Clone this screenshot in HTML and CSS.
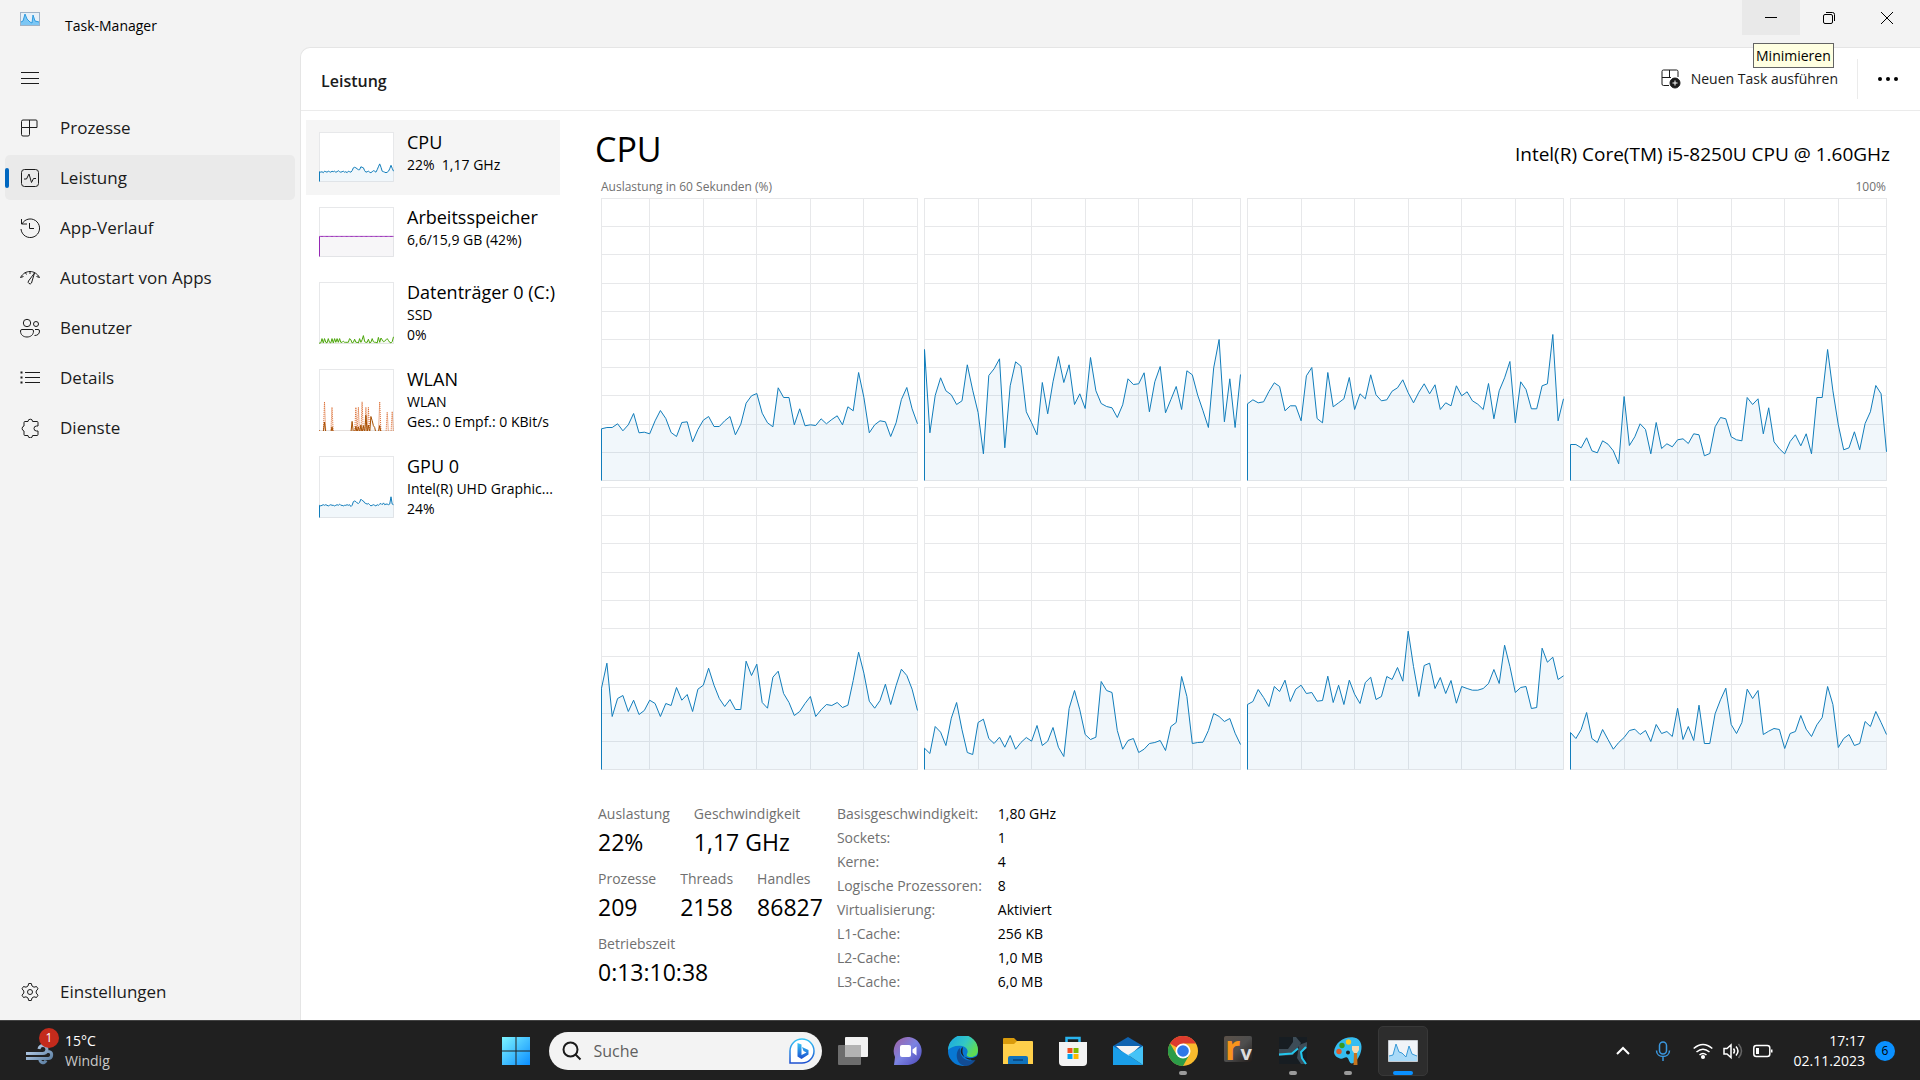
FILE: index.html
```html
<!DOCTYPE html>
<html lang="de">
<head>
  <meta charset="UTF-8">
  <meta name="viewport" content="width=device-width, initial-scale=1.0">
  <title>Task-Manager</title>
  <link rel="stylesheet" href="styles.css">
</head>
<body>

  <header class="titlebar">
    <svg class="app-icon" viewBox="0 0 20 14"><rect x=".5" y=".5" width="19" height="13" fill="#e6f0f8" stroke="#9fb2c6"/><path d="M1 10l2-1 2-7 2 5 3 3 2 1 1-8 2 6 4 1v3H1z" fill="#7cc6f4"/><path d="M1 10l2-1 2-7 2 5 3 3 2 1 1-8 2 6 4 1" fill="none" stroke="#2e9be0"/></svg>
    <span class="app-name">Task-Manager</span>
    <div class="window-buttons">
      <div class="minimize">
        <button class="hover" aria-label="Minimieren"><svg viewBox="0 0 12 12"><path d="M0 5.5h12"/></svg></button>
        <span class="tooltip">Minimieren</span>
      </div>
      <button aria-label="Verkleinern"><svg viewBox="0 0 12 12"><rect x=".5" y="2.500" width="9" height="9" rx="1.500"/><path d="M3 .5h6.500a2 2 0 0 1 2 2V9"/></svg></button>
      <button aria-label="Schließen"><svg viewBox="0 0 12 12"><path d="M0 0l12 12M12 0L0 12"/></svg></button>
    </div>
  </header>

  <div class="window">
    <nav class="sidebar">
      <button class="menu" aria-label="Menü"><svg viewBox="0 0 20 20"><path d="M1 4.500h18M1 10.500h18M1 15.500h18"/></svg></button>
      <button class="nav-item"><svg viewBox="0 0 20 20"><path d="M3 2h13a1 1 0 0 1 1 1v6.500H1.500V3.500A1.500 1.500 0 0 1 3 2zM9.500 2v14.500a1.500 1.500 0 0 1-1.500 1.500H3a1.500 1.500 0 0 1-1.500-1.500V9.500"/></svg>Prozesse</button>
      <button class="nav-item active"><svg viewBox="0 0 20 20"><rect x="1.500" y="1.500" width="17" height="17" rx="3"/><path d="M4 11h2.500L9 6l2.500 8.500L13.500 10.500H16"/></svg>Leistung</button>
      <button class="nav-item"><svg viewBox="0 0 20 20"><path d="M1.500 1v5H7M2 6a9.300 9.300 0 1 1-1 5M9.500 5v5.500H14"/></svg>App-Verlauf</button>
      <button class="nav-item"><svg viewBox="0 0 20 20"><path d="M.5 9.500C5 1.500 15 1.500 19.500 9.500M.5 9.500l3-1M19.500 9.500l-3-1M5 4l1.500 2.500M10 3v3M14.500 5L8.500 13a1.800 1.800 0 0 0 3 2z"/></svg>Autostart von Apps</button>
      <button class="nav-item"><svg viewBox="0 0 20 20"><circle cx="7" cy="5" r="3.700"/><circle cx="16" cy="6" r="2.500"/><path d="M2 11.500h10a1.500 1.500 0 0 1 1.500 1.500c0 4-3 6-6.500 6S.5 17 .5 13A1.500 1.500 0 0 1 2 11.500zM15 11.500h3a1.500 1.500 0 0 1 1.500 1.500c0 3-2 4.500-5 4.500"/></svg>Benutzer</button>
      <button class="nav-item"><svg viewBox="0 0 20 20"><path d="M5 4.500h15M5 9.500h15M5 14.500h15"/><path d="M.5 4.500h2M.5 9.500h2M.5 14.500h2" stroke-width="2"/></svg>Details</button>
      <button class="nav-item"><svg viewBox="0 0 20 20"><path d="M5 3.500h3a2.300 2.300 0 0 1 4.600 0H17a1 1 0 0 1 1 1v3.500h-1.500a2 2 0 0 0 0 5H18v3.500a1 1 0 0 1-1 1h-4.400a2.300 2.300 0 0 1-4.600 0H5a1 1 0 0 1-1-1V13a2.600 2.600 0 0 1 0-5V4.500a1 1 0 0 1 1-1z"/></svg>Dienste</button>
      <button class="nav-item settings"><svg viewBox="0 0 20 20"><path d="M8 4l.7-2.500h2.600L12 4l2 1.200 2.500-.7 1.500 2.300L16.200 9v2l1.800 2.200-1.500 2.300-2.500-.7-2 1.200-.7 2.500H8.700L8 16l-2-1.200-2.500.7L2 13.200 3.800 11V9L2 6.800l1.500-2.300 2.500.7z"/><circle cx="10" cy="10" r="2.500"/></svg>Einstellungen</button>
    </nav>

    <main class="page">
      <div class="page-header">
        <h1>Leistung</h1>
        <button class="run-task"><svg viewBox="0 0 20 20"><path d="M8 16.500H2.500a1.500 1.500 0 0 1-1.500-1.500V2.500A1.500 1.500 0 0 1 2.500 1h13A1.500 1.500 0 0 1 17 2.500V8M8.500 1v8M1 8.500h9"/><circle cx="14" cy="14" r="5" fill="#1b1b1b"/><path d="M14 11.500v5M11.500 14h5" stroke="#fff"/></svg>Neuen Task ausführen</button>
        <button class="more" aria-label="Weitere Optionen"><svg viewBox="0 0 20 4"><circle cx="2" cy="2" r="2"/><circle cx="10" cy="2" r="2"/><circle cx="18" cy="2" r="2"/></svg></button>
      </div>

      <div class="performance">
        <div class="resources">
          <button class="resource active">
            <svg class="thumb" data-thumb="cpu"></svg>
            <span class="resource-text"><span class="resource-name">CPU</span><span>22%&nbsp; 1,17 GHz</span></span>
          </button>
          <button class="resource">
            <svg class="thumb" data-thumb="memory"></svg>
            <span class="resource-text"><span class="resource-name">Arbeitsspeicher</span><span>6,6/15,9 GB (42%)</span></span>
          </button>
          <button class="resource tall">
            <svg class="thumb" data-thumb="disk"></svg>
            <span class="resource-text"><span class="resource-name">Datenträger 0 (C:)</span><span>SSD</span><span>0%</span></span>
          </button>
          <button class="resource tall">
            <svg class="thumb" data-thumb="wlan"></svg>
            <span class="resource-text"><span class="resource-name">WLAN</span><span>WLAN</span><span>Ges.: 0 Empf.: 0 KBit/s</span></span>
          </button>
          <button class="resource tall">
            <svg class="thumb" data-thumb="gpu"></svg>
            <span class="resource-text"><span class="resource-name">GPU 0</span><span>Intel(R) UHD Graphic...</span><span>24%</span></span>
          </button>
        </div>

        <section class="detail">
          <div class="detail-title">
            <h2>CPU</h2>
            <span class="cpu-name">Intel(R) Core(TM) i5-8250U CPU @ 1.60GHz</span>
          </div>
          <div class="axis">
            <span>Auslastung in 60 Sekunden (%)</span>
            <span>100%</span>
          </div>
          <div class="cores" id="cores"></div>

          <div class="stats">
            <div class="live">
              <div class="live-row">
                <div class="stat">Auslastung<strong>22%</strong></div>
                <div class="stat">Geschwindigkeit<strong>1,17 GHz</strong></div>
              </div>
              <div class="live-row">
                <div class="stat">Prozesse<strong>209</strong></div>
                <div class="stat">Threads<strong>2158</strong></div>
                <div class="stat">Handles<strong>86827</strong></div>
              </div>
              <div class="live-row">
                <div class="stat">Betriebszeit<strong>0:13:10:38</strong></div>
              </div>
            </div>
            <table class="specs">
              <tr><th>Basisgeschwindigkeit:</th><td>1,80 GHz</td></tr>
              <tr><th>Sockets:</th><td>1</td></tr>
              <tr><th>Kerne:</th><td>4</td></tr>
              <tr><th>Logische Prozessoren:</th><td>8</td></tr>
              <tr><th>Virtualisierung:</th><td>Aktiviert</td></tr>
              <tr><th>L1-Cache:</th><td>256 KB</td></tr>
              <tr><th>L2-Cache:</th><td>1,0 MB</td></tr>
              <tr><th>L3-Cache:</th><td>6,0 MB</td></tr>
            </table>
          </div>
        </section>
      </div>
    </main>
  </div>

  <footer class="taskbar">
    <button class="weather">
      <span class="weather-icon">
        <svg viewBox="0 0 30 30"><defs><linearGradient id="wind" x2="1" y2="1"><stop stop-color="#c5daf4"/><stop offset="1" stop-color="#54789c"/></linearGradient></defs><path d="M1 17.500h17a4 4 0 1 0-4-4.500M1 22.500h22a3.500 3.500 0 1 0-3-5M15 22.500a3 3 0 1 0 6 2" fill="none" stroke="url(#wind)" stroke-width="3"/></svg>
        <span class="alert">1</span>
      </span>
      <span class="weather-text"><span>15°C</span><span class="muted">Windig</span></span>
    </button>

    <div class="apps">
      <button class="app" aria-label="Start"><svg viewBox="0 0 30 30"><defs><linearGradient id="win" x2="1" y2="1"><stop stop-color="#7df4ff"/><stop offset="1" stop-color="#0a8dff"/></linearGradient></defs><path d="M1 1h13.500v13.500H1zM15.500 1H29v13.500H15.500zM1 15.500h13.500V29H1zM15.500 15.500H29V29H15.500z" fill="url(#win)"/></svg></button>
      <div class="search">
        <label for="search" aria-label="Suche"><svg viewBox="0 0 20 20"><circle cx="8.500" cy="8.500" r="7"/><path d="M13.500 13.500l5 5"/></svg></label>
        <input id="search" type="text" placeholder="Suche">
        <svg class="bing" viewBox="0 0 26 26"><defs><linearGradient id="bg" x2="0" y2="1"><stop stop-color="#35c4f5"/><stop offset="1" stop-color="#1d4fd0"/></linearGradient></defs><path d="M1 25V13A12 12 0 1 1 13 25z" fill="#fff" stroke="url(#bg)" stroke-width="1.500"/><path d="M8.500 5l4 1.500V17l5-2.500-3-1.500-1.500-4 6.500 3v4.500L12.500 21l-4-2.500z" fill="url(#bg)"/></svg>
      </div>
      <button class="app" aria-label="Aktive Anwendungen"><svg viewBox="0 0 30 30"><rect x="7" y="1" width="23" height="20" rx="1" fill="#f2f2f2"/><rect y="9" width="23" height="20" rx="1" fill="#6d6d6d"/><path d="M7 9h16v12H7z" fill="#b3b3b3"/></svg></button>
      <button class="app" aria-label="Chat"><svg viewBox="0 0 30 30"><defs><linearGradient id="chat" x2="1" y2="1"><stop stop-color="#a25f9f"/><stop offset=".5" stop-color="#7b83e2"/><stop offset="1" stop-color="#4b46b8"/></linearGradient></defs><path d="M1 29l1-8A14 14 0 1 1 15 29z" fill="url(#chat)"/><rect x="7" y="9" width="11" height="12" rx="2" fill="#fff"/><path d="M19.500 13.500l4-3v9l-4-3z" fill="#fff"/></svg></button>
      <button class="app" aria-label="Edge"><svg viewBox="0 0 30 30"><defs><linearGradient id="edge" x2="1" y2=".5"><stop stop-color="#17a4e5"/><stop offset=".6" stop-color="#33c7c5"/><stop offset="1" stop-color="#5fdc54"/></linearGradient></defs><circle cx="15" cy="15" r="15" fill="#0878d4"/><path d="M0 14A15 15 0 0 1 30 14c0 5-3 7-7 7-3 0-5-1-4-3 2-4-1-7-5-8-6-1-11 1-14 4z" fill="url(#edge)"/><path d="M12 12c-5 3-5 17 6 18 4 0 8-3 10-7-9 4-17-1-16-11z" fill="#124c94"/><path d="M15 11c-4 2-3 10 5 11 4 1 7-1 9-2l1-1v4l-2 1c-5 1-16-1-13-13z" fill="#202020"/></svg></button>
      <button class="app" aria-label="Explorer"><svg viewBox="0 0 30 30"><path d="M0 3a1 1 0 0 1 1-1h10l3 3v6H0z" fill="#d99b0c"/><path d="M0 8h11l3-3h15a1 1 0 0 1 1 1v22H0z" fill="#ffd04b"/><path d="M5 28v-6a2 2 0 0 1 2-2h16a2 2 0 0 1 2 2v6z" fill="#1173bd"/><path d="M10 24h10" stroke="#0b4e8a" stroke-width="2"/></svg></button>
      <button class="app" aria-label="Microsoft Store"><svg viewBox="0 0 30 30"><path d="M8.500 7V2h13v5" fill="none" stroke="#29b4ef" stroke-width="2.500"/><path d="M1 6h28v20a4 4 0 0 1-4 4H5a4 4 0 0 1-4-4z" fill="#f3f3f3"/><path d="M9.500 12h5v5h-5z" fill="#f25022"/><path d="M15.500 12h5v5h-5z" fill="#7fba00"/><path d="M9.500 18h5v5h-5z" fill="#00a4ef"/><path d="M15.500 18h5v5h-5z" fill="#ffb900"/></svg></button>
      <button class="app" aria-label="Mail"><svg viewBox="0 0 30 30"><path d="M0 10L15 1l15 9v5H0z" fill="#0f63b0"/><path d="M3 10h24L15 21z" fill="#f4f4f4"/><path d="M0 10l15 9 15 10H0z" fill="#1a9ee8"/><path d="M30 10L15 19l15 10z" fill="#45c3f7"/></svg></button>
      <button class="app running" aria-label="Chrome"><svg viewBox="0 0 30 30"><circle cx="15" cy="15" r="15" fill="#f9bb2d"/><path d="M15 15L2 7.500A15 15 0 0 1 28 7.500H15z" fill="#dd3b2e"/><path d="M2 7.500A15 15 0 0 0 15 30l6.500-11.500L15 15 8.500 18.500z" fill="#2c9c48"/><circle cx="15" cy="15" r="7.500" fill="#fff"/><circle cx="15" cy="15" r="5.800" fill="#2f78e8"/></svg></button>
      <button class="app" aria-label="RV"><svg class="rv" viewBox="0 0 30 30"><defs><linearGradient id="rv" x2="1" y2="1"><stop stop-color="#5c5148"/><stop offset=".5" stop-color="#4e4e4e"/><stop offset="1" stop-color="#211c1a"/></linearGradient></defs><rect x="1" width="28" height="26" rx="2" fill="url(#rv)"/><text x="2" y="24"><tspan class="rv-r">r</tspan><tspan class="rv-v">v</tspan></text></svg></button>
      <button class="app running" aria-label="Wallpaper"><svg viewBox="0 0 30 30"><path d="M1 1h28v27H1z" fill="#171d22"/><path d="M1 13h9l5-7V1h3l5 6-8 12-14 1z" fill="#3d4c57"/><path d="M21 9l8-3v6l-5 4v6l5 6h-6l-4-6z" fill="#3d4c57"/><path d="M1 18.500l13-1 6-5M28 11l-5 5 1 6 4 6" fill="none" stroke="#22c7ee" stroke-width="2"/></svg></button>
      <button class="app running" aria-label="Paint"><svg viewBox="0 0 30 30"><path d="M1 16C2 6 12 0 21 1.500c8 1.500 9 10 6 17-2 4-4 8-8 9-3 0-3-5-5-6s-4 2-7 1-6-3-6-6.500z" fill="#35bdf1"/><circle cx="6" cy="15.500" r="2.700" fill="#de5b2a"/><circle cx="9" cy="9.500" r="2.700" fill="#379c22"/><circle cx="15.500" cy="6" r="2.700" fill="#fac821"/><circle cx="15" cy="16.500" r="2" fill="#202020"/><path d="M21 17h3l.5 12h-4z" fill="#c5741e"/><path d="M19 10h7v4l-2 3h-3l-2-3z" fill="#f6d9ad"/></svg></button>
      <button class="app running current" aria-label="Task-Manager"><svg viewBox="0 0 30 30"><path d="M.5 4.500h29v21H.5z" fill="#f0f4f8" stroke="#c7cbd0"/><path d="M1 20l4-1 3-11 3 8 3 1 4 4 3-11 3 8 5 2v5H1z" fill="#a9daf8"/><path d="M1 20l4-1 3-11 3 8 3 1 4 4 3-11 3 8 5 2" fill="none" stroke="#3899d7"/></svg></button>
    </div>

    <div class="tray">
      <button class="tray-icon" aria-label="Ausgeblendete Symbole"><svg viewBox="0 0 20 20"><path d="M4 13l6-6 6 6" stroke-width="2"/></svg></button>
      <button class="tray-icon" aria-label="Mikrofon"><svg class="mic" viewBox="0 0 20 20"><rect x="6.500" y="1" width="7" height="12" rx="3.500"/><path d="M3.500 9.500c0 8 13 8 13 0M10 16v4"/></svg></button>
      <button class="tray-icon network" aria-label="Netzwerk, Lautstärke und Akku">
        <svg viewBox="0 0 20 20"><path d="M.7 7.500q9.300-8 18.600 0M3.500 11q6.500-5.500 13 0M6.500 14q3.500-3 7 0"/><circle cx="10" cy="16" r="1.300" fill="#fff"/></svg>
        <svg viewBox="0 0 20 20"><path d="M1 7.500h3l4-3.500v12.500L4 13H1zM10.500 7.500q2 2.500 0 5M13 5.500q4 4.500 0 9"/><path d="M15.500 3q6 7 0 14" stroke="#666"/></svg>
        <svg viewBox="0 0 20 20"><rect x=".8" y="4.500" width="16" height="11" rx="2.500"/><path d="M3 7h3v6H3zM18 8.500h1.500v3H18z" fill="#fff" stroke="none"/></svg>
      </button>
      <button class="clock"><span>17:17</span><span>02.11.2023</span></button>
      <span class="count">6</span>
    </div>
  </footer>

  <script>
    // utilisation per logical processor, 60 samples, 846 = 100%
    const MAX = 846;
    const cores = [
      [155,159,159,170,149,167,201,143,145,140,179,210,186,144,132,174,176,116,153,181,192,162,162,179,192,137,169,232,254,261,202,173,161,278,249,249,167,215,164,167,165,185,170,183,194,167,221,209,324,249,143,167,179,176,132,173,243,279,215,170],
      [393,143,255,308,269,257,228,239,347,271,204,80,315,335,365,98,284,356,343,206,173,137,294,200,296,372,294,347,228,260,216,369,269,231,222,218,189,227,305,288,290,323,206,296,342,203,243,282,213,329,317,256,209,159,338,423,176,305,159,318],
      [230,242,233,236,267,293,282,209,224,224,179,314,339,186,173,324,221,233,245,309,213,260,245,317,257,239,242,268,278,302,263,233,265,290,260,287,213,233,224,284,254,266,239,229,213,291,185,269,308,357,173,296,273,215,215,284,290,438,179,245],
      [108,108,98,128,89,83,119,109,89,50,252,105,131,170,153,80,174,96,110,101,122,125,111,140,137,74,81,161,189,185,131,122,119,249,228,245,140,218,116,95,80,117,137,104,140,80,249,249,393,269,167,92,98,146,92,171,206,285,260,86],
      [244,319,159,213,222,174,208,165,177,208,198,159,198,192,246,208,225,174,241,253,304,253,213,189,210,180,180,325,282,316,201,184,277,295,228,201,162,174,198,219,159,179,195,192,201,186,193,267,352,289,205,184,207,256,195,252,301,282,241,177],
      [64,48,129,112,72,154,201,119,51,45,141,151,93,78,97,67,102,61,81,96,85,132,72,85,126,67,39,183,237,179,105,90,97,264,237,231,117,61,87,93,51,61,78,81,87,57,129,141,279,219,78,81,82,117,168,159,144,153,109,75],
      [195,204,240,216,189,249,234,268,204,241,253,228,231,205,207,280,201,253,195,268,226,198,261,277,210,219,279,270,306,265,415,309,219,312,319,243,276,228,267,199,249,243,238,238,243,258,300,258,373,309,231,246,249,183,186,364,322,337,270,281],
      [111,93,120,171,93,81,120,90,61,81,96,117,121,105,117,84,135,108,114,99,184,90,129,87,193,78,78,167,209,244,135,108,141,241,213,237,105,115,123,120,63,108,114,162,121,99,134,156,249,195,66,93,105,72,78,144,129,174,141,105]
    ];

    // small charts in the resource list, values in percent
    const thumbs = {
      cpu: [{ color: "#117dbb", data: [20,19,20,18,21,20,19,21,20,19,21,20,21,19,20,22,20,19,20,21,19,20,18,21,20,19,22,28,29,28,26,24,24,30,29,28,22,19,20,21,19,18,20,22,21,19,24,30,36,29,21,20,19,18,19,21,26,33,27,21] }],
      memory: [{ color: "#9528b4", fill: "#7a5f80", data: Array(60).fill(41) }],
      disk: [{ color: "#4da60c", data: [1,1,8,1,8,2,1,8,2,1,8,1,8,2,8,2,8,2,2,4,2,2,2,2,8,6,1,2,7,2,2,1,8,2,6,13,3,2,2,7,1,2,8,3,2,2,1,10,2,9,6,3,4,6,8,5,2,1,3,11] }],
      wlan: [
        { color: "#dc6b2f", dash: "1 1", data: spikes({ 4: 47, 10: 38, 29: 38, 31: 38, 34: 47, 37: 38, 39: 38, 48: 47, 54: 30, 58: 31 }) },
        { color: "#a74f01", data: spikes({ 4: 14, 10: 6, 26: 15, 29: 7, 31: 6, 33: 9, 35: 8, 37: 25, 39: 9, 41: 23, 42: 16, 43: 8, 44: 5, 48: 8 }) }
      ],
      gpu: [{ color: "#117dbb", data: [20,19,20,21,20,21,20,19,20,21,20,20,19,20,21,20,22,20,20,19,20,20,21,20,21,18,20,26,27,26,24,23,25,30,28,27,24,23,22,23,21,19,20,21,20,19,21,20,22,23,21,24,21,22,22,21,22,34,22,21] }]
    };

    // idle samples go just below the frame, so no base line shows
    function spikes(points) {
      return Array.from({ length: 60 }, (_, i) => points[i] || -4);
    }

    function plot(data, max, w, h, color, dash, fill = color) {
      const points = data.map((v, i) => `${(i * w / 59 + 0.5).toFixed(1)},${(h - v / max * h + 0.5).toFixed(1)}`).join(" ");
      return `
        <polygon points="0.5,${h + 0.5} ${points} ${w + 0.5},${h + 0.5}" fill="${fill}" fill-opacity="0.06"/>
        <polyline points="0.5,${h + 0.5} ${points}" fill="none" stroke="${color}" ${dash ? `stroke-dasharray="${dash}"` : ""}/>`;
    }

    function frame(w, h) {
      return `<rect class="grid" x="0.5" y="0.5" width="${w}" height="${h}"/>`;
    }

    function drawCore(svg, index) {
      const w = svg.clientWidth - 1;
      const h = svg.clientHeight - 1;
      const first = index % 4 === 0 ? 9 : 10;
      let html = frame(w, h);
      for (let i = 1; i < 10; i++) {
        html += `<path class="grid" d="M0 ${Math.round(h * i / 10) + 0.5}h${w}"/>`;
      }
      for (let i = first; i < 59; i += 10) {
        html += `<path class="grid" d="M${Math.round(w * i / 59) + 0.5} 0v${h}"/>`;
      }
      svg.innerHTML = html + plot(cores[index], MAX, w, h, "#117dbb");
    }

    function drawThumb(svg) {
      const w = svg.clientWidth - 1;
      const h = svg.clientHeight - 1;
      svg.innerHTML = frame(w, h) + thumbs[svg.dataset.thumb]
        .map(line => plot(line.data, 100, w, h, line.color, line.dash, line.fill)).join("");
    }

    function drawAll() {
      document.querySelectorAll(".core").forEach(drawCore);
      document.querySelectorAll(".thumb").forEach(drawThumb);
    }

    document.getElementById("cores").innerHTML = cores.map(() => `<svg class="core"></svg>`).join("");
    drawAll();
    window.addEventListener("resize", drawAll);
  </script>
</body>
</html>
```
FILE: styles.css
```css
* {
  box-sizing: border-box;
}

body {
  margin: 0;
  height: 100vh;
  display: flex;
  flex-direction: column;
  background: #f3f3f3;
  color: #000;
  font-family: "Open Sans", "Noto Sans", sans-serif;
  font-size: 14px;
  line-height: 20px;
}

button {
  margin: 0;
  padding: 0;
  border: none;
  background: none;
  color: inherit;
  font: inherit;
  text-align: left;
}

svg {
  display: block;
  flex: none;
}

h1, h2 {
  margin: 0;
}

/* Titelleiste */
.titlebar {
  display: flex;
  height: 47px;
}

.app-icon {
  width: 20px;
  height: 14px;
  margin: 12px 25px 0 20px;
}

.app-name {
  padding-top: 16px;
}

.window-buttons {
  display: flex;
  margin-left: auto;
  padding-right: 4px;
}

.window-buttons button {
  display: flex;
  align-items: center;
  justify-content: center;
  width: 58px;
  height: 35px;
}

.window-buttons .hover {
  background: #e9e9e9;
}

.window-buttons svg {
  width: 12px;
  height: 12px;
  fill: none;
  stroke: #000;
}

.minimize {
  position: relative;
}

.tooltip {
  position: absolute;
  z-index: 1;
  top: 43px;
  left: 11px;
  padding: 2px 2px 1px;
  border: 1px solid #646464;
  background: #ffffe1;
}

/* Fenster */
.window {
  display: flex;
  flex: 1;
  min-height: 0;
}

.sidebar {
  display: flex;
  flex-direction: column;
  gap: 5px;
  width: 300px;
  padding: 8px 5px 6px;
}

.sidebar svg,
.run-task svg {
  width: 20px;
  height: 20px;
  fill: none;
  stroke: #1b1b1b;
}

.menu,
.nav-item {
  display: flex;
  align-items: center;
  gap: 20px;
  height: 45px;
  padding-left: 15px;
  border-radius: 5px;
  color: #1b1b1b;
  font-size: 17px;
}

.nav-item.active {
  position: relative;
  background: #eaeaea;
}

.nav-item.active::before {
  content: "";
  position: absolute;
  left: 0;
  top: 13px;
  width: 4px;
  height: 20px;
  border-radius: 2px;
  background: #0067c0;
}

.settings {
  margin-top: auto;
}

.page {
  display: flex;
  flex: 1;
  flex-direction: column;
  min-width: 0;
  border: solid #e5e5e5;
  border-width: 1px 0 0 1px;
  border-top-left-radius: 10px;
  background: #fff;
}

.page-header {
  display: flex;
  align-items: center;
  height: 63px;
  padding: 0 22px 0 20px;
  border-bottom: 1px solid #ebebeb;
}

.page-header h1 {
  margin-right: auto;
  padding-top: 3px;
  font-size: 16px;
  font-weight: 600;
  color: #1b1b1b;
}

.run-task {
  display: flex;
  align-items: center;
  gap: 10px;
  height: 40px;
  padding-right: 19px;
  border-right: 1px solid #ebebeb;
  color: #1b1b1b;
}

.more {
  padding-left: 20px;
}

.more svg {
  width: 20px;
  height: 4px;
}

/* Liste der Ressourcen */
.performance {
  display: flex;
  flex: 1;
  min-height: 0;
}

.resources {
  width: 259px;
  padding: 9px 0 0 5px;
}

.resource {
  display: flex;
  gap: 13px;
  width: 254px;
  height: 75px;
  padding: 12px 0 0 13px;
}

.resource.active {
  background: #f5f5f5;
}

.resource.tall {
  height: 87px;
}

.thumb {
  width: 75px;
  height: 50px;
  background: #fff;
}

.tall .thumb {
  height: 62px;
}

.resource-text {
  display: flex;
  flex-direction: column;
  white-space: nowrap;
}

.resource-name {
  height: 23px;
  font-size: 18px;
}

/* Diagramme */
.detail {
  display: flex;
  flex: 1;
  flex-direction: column;
  min-width: 0;
  padding: 13px 30px 26px 35px;
}

.detail-title {
  display: flex;
  align-items: center;
  justify-content: space-between;
  height: 50px;
}

.detail-title h2 {
  font-size: 34px;
  font-weight: 400;
}

.cpu-name {
  padding-top: 10px;
  font-size: 19px;
}

.axis {
  display: flex;
  justify-content: space-between;
  padding: 3px 4px 1px 6px;
  color: #707070;
  font-size: 12px;
}

.cores {
  display: grid;
  flex: 1;
  grid-template-columns: repeat(4, minmax(0, 1fr));
  grid-template-rows: repeat(2, minmax(0, 1fr));
  gap: 6px;
  min-height: 0;
  padding: 0 3px 0 6px;
}

.core {
  width: 100%;
  height: 100%;
}

.grid {
  fill: none;
  stroke: #e7e8ea;
}

/* Messwerte */
.stats {
  display: flex;
  gap: 14px;
  margin-top: 32px;
  padding-left: 3px;
}

.live {
  display: flex;
  flex-direction: column;
  gap: 9px;
}

.live-row {
  display: flex;
  gap: 24px;
}

.stat {
  color: #707070;
  line-height: 24px;
}

.stat strong {
  display: block;
  color: #000;
  font-size: 23px;
  font-weight: 400;
  line-height: 32px;
}

.specs {
  border-collapse: collapse;
}

.specs th,
.specs td {
  height: 24px;
  padding: 0;
  font-weight: 400;
  text-align: left;
}

.specs th {
  padding-right: 16px;
  color: #707070;
}

/* Taskleiste */
.taskbar {
  display: grid;
  grid-template-columns: 1fr auto 1fr;
  height: 60px;
  border-top: 1px solid #434343;
  background: #202020;
  color: #fff;
}

.weather {
  display: flex;
  align-items: center;
  gap: 10px;
  padding-left: 25px;
}

.weather-icon {
  position: relative;
}

.weather-icon svg {
  width: 30px;
  height: 30px;
}

.alert {
  position: absolute;
  top: -8px;
  right: -4px;
  width: 20px;
  height: 20px;
  border-radius: 50%;
  background: #c42b1c;
  font-size: 12px;
  text-align: center;
}

.weather-text,
.clock {
  display: flex;
  flex-direction: column;
}

.muted {
  color: #c8c8c8;
}

.apps {
  display: flex;
  align-items: center;
  gap: 5px;
  padding-right: 2px;
}

.app {
  position: relative;
  display: flex;
  align-items: center;
  justify-content: center;
  width: 50px;
  height: 50px;
  border-radius: 5px;
}

.app svg {
  width: 30px;
  height: 30px;
}

.app .rv {
  overflow: visible;
  font-weight: 700;
}

.rv-r {
  font-size: 34px;
  fill: #f8941c;
}

.rv-v {
  font-size: 20px;
  fill: #ddd;
}

.running::after {
  content: "";
  position: absolute;
  bottom: 1px;
  left: 21px;
  width: 8px;
  height: 4px;
  border-radius: 2px;
  background: #9a9a9a;
}

.current {
  border: 1px solid #383838;
  background: #2d2d2d;
}

.current::after {
  bottom: 0;
  left: 14px;
  width: 20px;
  background: #0a90ff;
}

.search {
  display: flex;
  align-items: center;
  gap: 12px;
  width: 273px;
  height: 38px;
  margin: 0 1px 0 3px;
  padding: 0 7px 0 13px;
  border-radius: 19px;
  background: #f3f3f3;
}

.search label svg {
  width: 20px;
  height: 20px;
  fill: none;
  stroke: #1b1b1b;
  stroke-width: 2;
}

.search input {
  flex: 1;
  min-width: 0;
  padding: 0;
  border: none;
  outline: none;
  background: none;
  font: inherit;
  font-size: 16px;
}

.search input::placeholder {
  color: #5f5f5f;
}

.bing {
  width: 26px;
  height: 26px;
}

.tray {
  display: flex;
  align-items: center;
  justify-content: flex-end;
  padding-right: 25px;
}

.tray-icon {
  width: 40px;
  padding: 0 10px;
}

.tray-icon svg {
  width: 20px;
  height: 20px;
  fill: none;
  stroke: #fff;
  stroke-width: 1.5;
}

.tray-icon .mic {
  stroke: #3a96dd;
}

.network {
  display: flex;
  gap: 10px;
  width: 100px;
}

.clock {
  margin: 0 10px 0 11px;
  text-align: right;
}

.count {
  width: 20px;
  height: 20px;
  border-radius: 50%;
  background: #0a90ff;
  color: #000;
  font-size: 12px;
  text-align: center;
}
```
